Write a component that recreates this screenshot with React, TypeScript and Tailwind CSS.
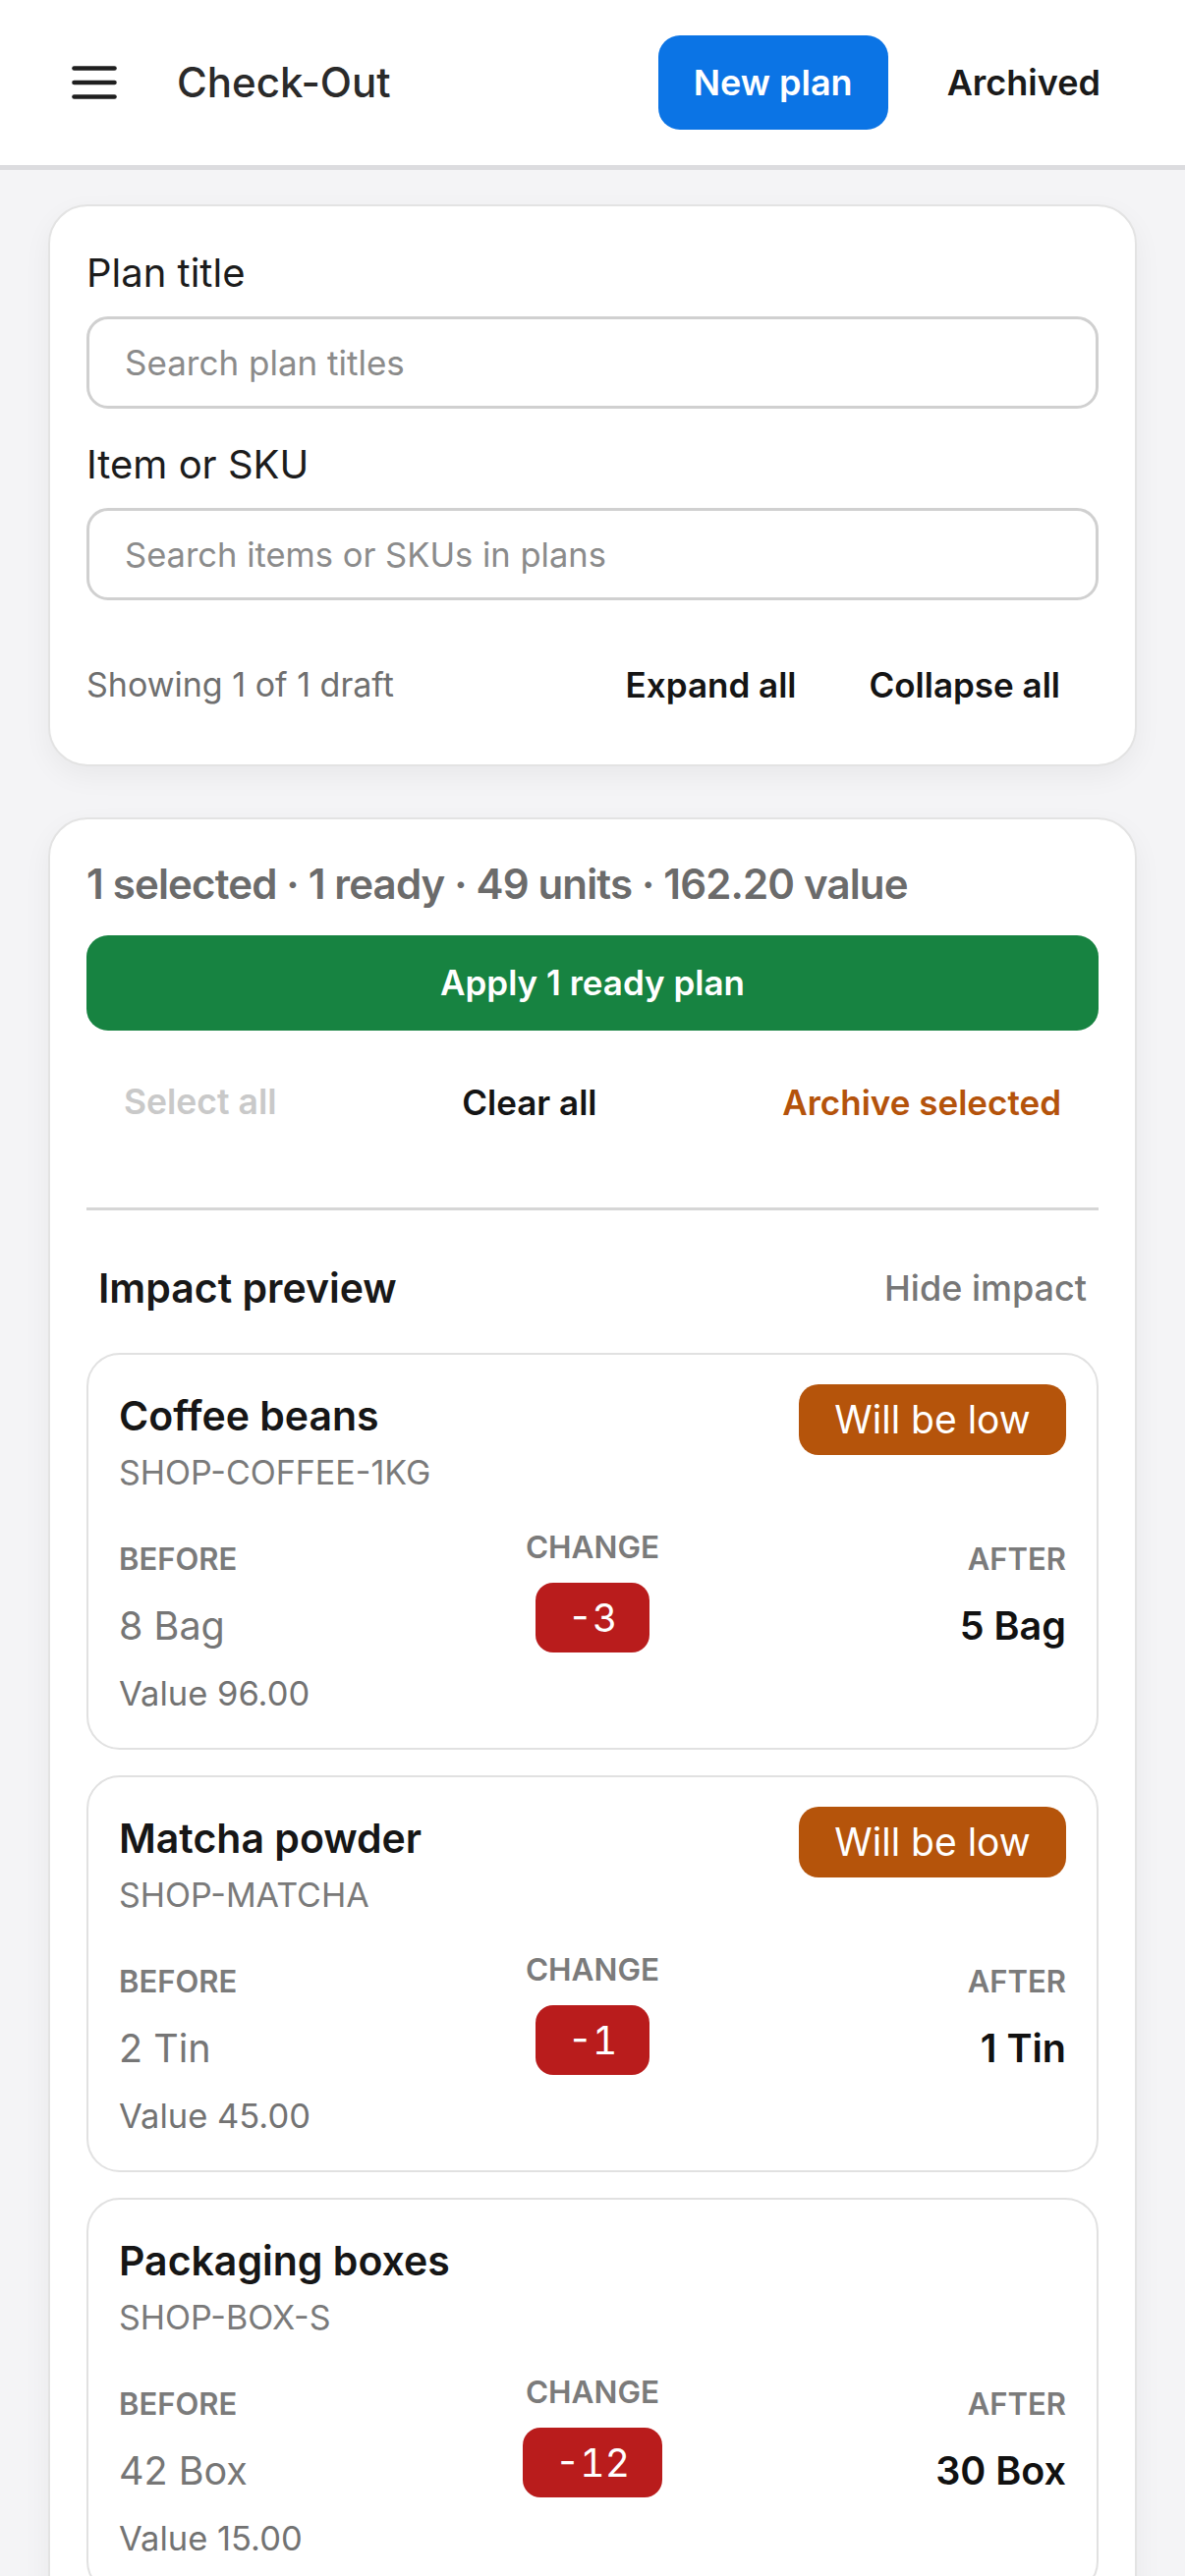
import React from "react";

const font = { fontFamily: "Inter, 'Liberation Sans', sans-serif" };

type Item = {
  name: string;
  sku: string;
  before: string;
  change: string;
  after: string;
  value: string;
  low: boolean;
};

const items: Item[] = [
  { name: "Coffee beans", sku: "SHOP-COFFEE-1KG", before: "8 Bag", change: "-3", after: "5 Bag", value: "Value 96.00", low: true },
  { name: "Matcha powder", sku: "SHOP-MATCHA", before: "2 Tin", change: "-1", after: "1 Tin", value: "Value 45.00", low: true },
  { name: "Packaging boxes", sku: "SHOP-BOX-S", before: "42 Box", change: "-12", after: "30 Box", value: "Value 15.00", low: false },
];

function ItemCard({ item }: { item: Item }) {
  return (
    <div className="rounded-[34px] border-2 border-[#e1e1e1] bg-white px-[31px] pb-[35px] pt-[30px]">
      <div className="flex items-start justify-between">
        <div className="flex flex-col">
          <div className="mt-[8px] text-[41px] font-semibold leading-[48px] text-[#161616]">{item.name}</div>
          <div className="mt-[15px] text-[34px] leading-[38px] text-[#7a7a7a]">{item.sku}</div>
        </div>
        {item.low && (
          <div className="flex h-[72px] w-[272px] items-center justify-center rounded-[20px] bg-[#b5540b] text-[39px] leading-[46px] text-white">
            Will be low
          </div>
        )}
      </div>
      <div className="mt-[39px] grid grid-cols-3">
        <div className="mt-[12px] flex flex-col items-start">
          <div className="text-[31px] font-semibold leading-[36px] text-[#7b7b7b]">BEFORE</div>
          <div className="mt-[27px] text-[39.5px] leading-[46px] text-[#767676]">{item.before}</div>
          <div className="mt-[26px] text-[34.5px] leading-[40px] text-[#737373]">{item.value}</div>
        </div>
        <div className="flex flex-col items-center">
          <div className="text-[31.5px] font-semibold leading-[36px] text-[#7b7b7b]">CHANGE</div>
          <div className="mt-[18px] flex h-[71px] min-w-[114px] items-center justify-center rounded-[18px] bg-[#b91c1c] px-[33px] text-[39px] leading-[46px] tabular-nums text-white">
            {item.change}
          </div>
        </div>
        <div className="mt-[12px] flex flex-col items-end">
          <div className="text-[31px] font-semibold leading-[36px] text-[#7b7b7b]">AFTER</div>
          <div className="mt-[27px] text-[39.5px] font-semibold leading-[46px] text-[#111111]">{item.after}</div>
        </div>
      </div>
    </div>
  );
}

export default function App() {
  return (
    <div style={font} className="min-h-[2622px] w-full bg-[#f4f4f6]">
      <header className="flex h-[173px] items-center border-b-[5px] border-[#dcdcdf] bg-white pl-[73px] pr-[86px]">
        <svg width="46" height="35" viewBox="0 0 46 35" fill="none" className="shrink-0">
          <line x1="2.5" y1="2.5" x2="43.5" y2="2.5" stroke="#1f1f1f" strokeWidth="4.6" strokeLinecap="round" />
          <line x1="2.5" y1="17" x2="43.5" y2="17" stroke="#1f1f1f" strokeWidth="4.6" strokeLinecap="round" />
          <line x1="2.5" y1="31.5" x2="43.5" y2="31.5" stroke="#1f1f1f" strokeWidth="4.6" strokeLinecap="round" />
        </svg>
        <div className="ml-[61px] text-[42px] font-medium leading-[50px] text-[#2a2a2a]">Check-Out</div>
        <div className="flex-1" />
        <button className="flex h-[96px] w-[234px] items-center justify-center rounded-[22px] bg-[#0b74e5] text-[36px] font-semibold text-white">
          New plan
        </button>
        <button className="ml-[60px] text-[36px] font-semibold leading-[44px] text-[#1a1a1a]">Archived</button>
      </header>

      <main className="px-[49px] pt-[35px] pb-[40px]">
        <section className="rounded-[40px] border-2 border-[#e3e3e3] bg-white px-[37px] pb-[39px] pt-[44px] shadow-[0_10px_28px_rgba(0,0,0,0.05)]">
          <div className="text-[40px] leading-[48px] text-[#1c1c1c]">Plan title</div>
          <input
            className="mt-[20px] block h-[94px] w-full rounded-[22px] border-[3px] border-[#d0d0d0] bg-white pl-[36px] text-[35px] text-[#222] outline-none placeholder:text-[#8b8b8b]"
            placeholder="Search plan titles"
          />
          <div className="mt-[33px] text-[40px] leading-[48px] text-[#1c1c1c]">Item or SKU</div>
          <input
            className="mt-[20px] block h-[94px] w-full rounded-[22px] border-[3px] border-[#d0d0d0] bg-white pl-[36px] text-[34.5px] text-[#222] outline-none placeholder:text-[#8b8b8b]"
            placeholder="Search items or SKUs in plans"
          />
          <div className="mt-[44px] flex items-center justify-between">
            <div className="text-[34px] leading-[44px] text-[#6f6f6f]">Showing 1 of 1 draft</div>
            <div className="flex">
              <button className="px-[37px] py-[20px] text-[35px] font-semibold leading-[44px] text-[#141414]">Expand all</button>
              <button className="py-[20px] pl-[37px] pr-[39px] text-[35px] font-semibold leading-[44px] text-[#141414]">Collapse all</button>
            </div>
          </div>
        </section>

        <section className="mt-[52px] rounded-[40px] border-2 border-[#e3e3e3] bg-white px-[37px] pb-[40px] pt-[40px] shadow-[0_10px_28px_rgba(0,0,0,0.05)]">
          <div className="text-[42px] font-semibold leading-[52px] tracking-[-0.02em] text-[#6b6b6b]">1 selected · 1 ready · 49 units · 162.20 value</div>
          <button className="mt-[26px] flex h-[97px] w-full items-center justify-center rounded-[22px] bg-[#178341] text-[35px] font-semibold text-white">
            Apply 1 ready plan
          </button>
          <div className="mt-[32px] flex items-center justify-between">
            <button className="px-[38px] py-[20px] text-[35.5px] font-semibold leading-[42px] text-[#c9c9c9]">Select all</button>
            <button className="px-[38px] py-[20px] text-[35px] font-semibold leading-[42px] text-[#141414]">Clear all</button>
            <button className="px-[38px] py-[20px] text-[35px] font-semibold leading-[42px] text-[#b4530b]">Archive selected</button>
          </div>
          <div className="mt-[66px] h-[3px] w-full bg-[#d6d6d6]" />
          <div className="mt-[55px] flex items-center justify-between px-[12px]">
            <div className="text-[41px] font-semibold leading-[48px] text-[#181818]">Impact preview</div>
            <button className="text-[36px] font-medium leading-[44px] text-[#777777]">Hide impact</button>
          </div>
          <div className="mt-[42px] flex flex-col gap-[26px]">
            {items.map((it) => (
              <ItemCard key={it.sku} item={it} />
            ))}
          </div>
        </section>
      </main>
    </div>
  );
}
